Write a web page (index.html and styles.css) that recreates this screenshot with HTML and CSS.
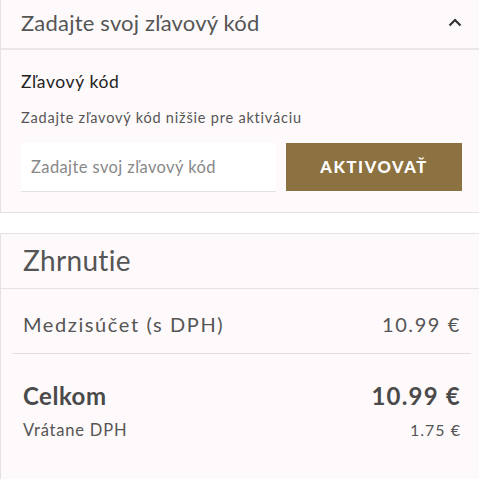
FILE: index.html
```html
<!DOCTYPE html>
<html lang="sk">
<head>
<meta charset="utf-8">
<link rel="stylesheet" href="styles.css">
</head>
<body>
<section class="card coupon">
  <div class="card-head">
    <h2 class="card-title">Zadajte svoj zľavový kód</h2>
    <svg class="chevron" width="14" height="9" viewBox="0 0 14 9"><path d="M1.5 7.5 L7 2 L12.5 7.5" fill="none" stroke="#333" stroke-width="2.2"/></svg>
  </div>
  <div class="coupon-body">
    <div class="label">Zľavový kód</div>
    <p class="hint">Zadajte zľavový kód nižšie pre aktiváciu</p>
    <div class="coupon-form">
      <div class="input">Zadajte svoj zľavový kód</div>
      <button class="btn">AKTIVOVAŤ</button>
    </div>
  </div>
</section>
<section class="card summary">
  <h2 class="summary-title">Zhrnutie</h2>
  <div class="summary-body">
    <div class="row subtotal"><span>Medzisúčet (s DPH)</span><span class="num">10.99 €</span></div>
    <div class="totals">
      <div class="row total"><span>Celkom</span><span class="num">10.99 €</span></div>
      <div class="row vat"><span>Vrátane DPH</span><span class="vat-val">1.75 €</span></div>
    </div>
  </div>
</section>
</body>
</html>
```
FILE: styles.css
```css
* { box-sizing: border-box; }
html, body { margin: 0; padding: 0; background: #fff; }
body { font-family: Lato, "Open Sans", sans-serif; color: #4a4a4a; width: 479px; overflow: hidden; }
.card { background: #fefafb; border-left: 1px solid #e6e2e3; }
.coupon { border-bottom: 1px solid #e6e2e3; }
.card-head { height: 50px; display: flex; align-items: center; justify-content: space-between; padding: 0 17px 0 20px; border-bottom: 2px solid #ebe7e8; }
.card-title { margin: 0 0 4px; font-weight: 400; font-size: 22px; letter-spacing: 0.2px; color: #555; }
.chevron { display: block; margin-top: -3px; }
.coupon-body { padding: 21px 17px 20px 20px; }
.label { font-size: 17.5px; color: #222; line-height: 22px; letter-spacing: 0.6px; }
.hint { margin: 16px 0 0; font-size: 14.5px; line-height: 18px; color: #555; letter-spacing: 0.8px; }
.coupon-form { display: flex; gap: 10px; margin-top: 16px; }
.input { flex: 0 0 255px; height: 49px; background: #fff; border-bottom: 1px solid #e5e1e2; display: flex; align-items: center; padding-left: 10px; font-size: 16.5px; letter-spacing: 0.4px; color: #888; }
.btn { flex: 1; height: 48px; background: #8b7240; border: 0; color: #fff; font-family: inherit; font-weight: 900; font-size: 16.5px; letter-spacing: 1.6px; padding: 0; }
.summary { margin-top: 20px; border-top: 1px solid #e6e2e3; }
.summary-title { margin: 0; height: 55px; display: flex; align-items: center; padding-left: 22px; padding-bottom: 2px; font-weight: 400; font-size: 28px; letter-spacing: 0.3px; color: #555; border-bottom: 1px solid #e6e2e3; }
.summary-body { padding: 0 8px 60px 11px; }
.row { display: flex; justify-content: space-between; padding: 0 11px 0 11px; }
.subtotal { height: 65px; align-items: center; font-size: 20px; letter-spacing: 1.6px; color: #555; border-bottom: 1px solid #e3dfe0; padding-top: 5px; }
.subtotal .num { letter-spacing: 1.6px; margin-right: -1px; }
.totals { padding-top: 27px; }
.total { font-size: 24px; font-weight: 700; color: #4a4a4a; line-height: 30px; letter-spacing: 0.5px; }
.total .num { letter-spacing: 1.2px; margin-right: -1px; }
.vat { font-size: 16.5px; color: #555; margin-top: 9px; letter-spacing: 0.8px; }
.vat-val { font-size: 16px; letter-spacing: 1px; margin-right: -1px; }
```
